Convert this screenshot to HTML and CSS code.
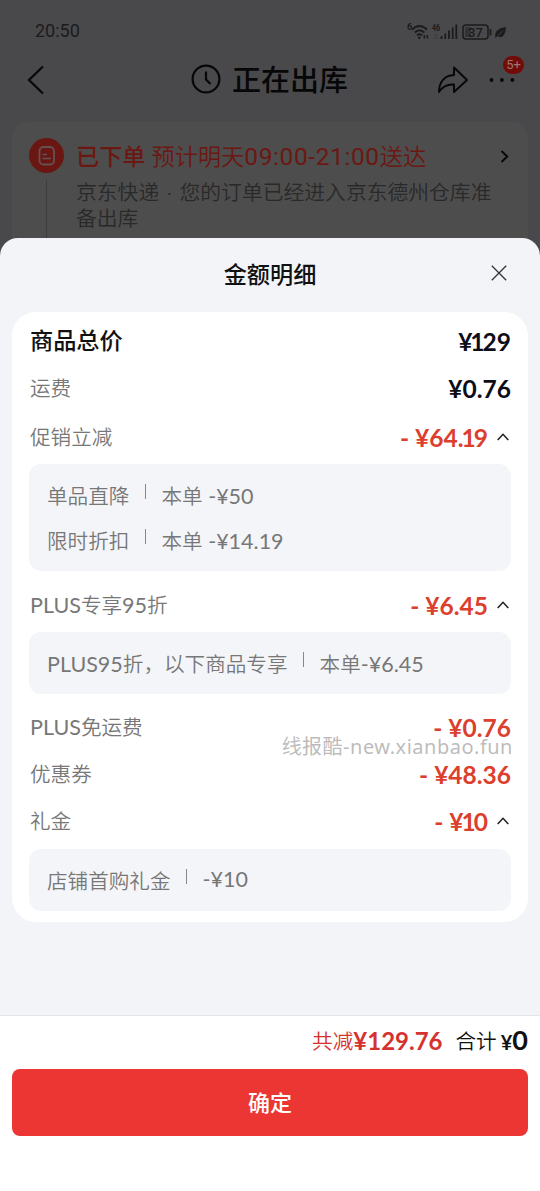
FILE: index.html
```html
<!DOCTYPE html>
<html lang="zh-CN">
<head>
<meta charset="utf-8">
<title>金额明细</title>
<link rel="stylesheet" href="styles.css">
</head>
<body>
<div class="page">
  <header class="status">
    <span class="time">20:50</span>
    <svg class="status-icons" width="102" height="20" viewBox="0 0 102 20" fill="none" stroke="#1b1b1c">
      <text x="0" y="8" class="tiny">6</text>
      <path d="M5 7.5Q12.500 0.500 20 7.500M7.800 10.500Q12.500 6.300 17.200 10.500M10 13.300Q12.500 11.300 15 13.300" stroke-width="1.800"/>
      <circle cx="12.300" cy="15.700" r="1.300" fill="#1b1b1c" stroke="none"/>
      <path d="M17.300 13v3.500M20.300 13v3.500" stroke-width="1.500"/>
      <text x="25" y="9" class="tiny" textLength="8" lengthAdjust="spacingAndGlyphs">46</text>
      <path d="M34.500 14v3M38.300 11.500v5.500M42 8.500v8.500M45.700 5.500v11.500M49.300 2.500v14.500" stroke-width="1.800"/>
      <path d="M27 13h4M27 16h4" stroke="#3a3a3c"/>
      <rect x="56" y="3" width="25" height="14" rx="3" stroke-width="1.500"/>
      <path d="M58 5h6v10h-6z" fill="#333335" stroke="none"/>
      <text x="61" y="14.500" class="battery">37</text>
      <path d="M83.500 7v6.500" stroke-width="1.800"/>
      <path d="M88.500 16.500C87 8.500 92 6 99 5C98.500 13 95.500 16.500 90.500 14.500Z" fill="#1b1b1c" stroke="none"/>
      <path d="M88.500 16.500L96 8.500" stroke="#49494b" stroke-width=".8"/>
    </svg>
  </header>
  <nav class="nav">
    <svg class="back" width="18" height="30" viewBox="0 0 18 30" fill="none" stroke="#070708" stroke-width="2.200"><path d="M16 1.500L2 15L16 28.500"/></svg>
    <div class="nav-title">
      <svg width="30" height="30" viewBox="0 0 30 30" fill="none" stroke="#070708" stroke-width="2.200"><circle cx="15" cy="14" r="13.400"/><path d="M15 6.500v8l4.500 4.500"/></svg>
      <span>正在出库</span>
    </div>
    <div class="nav-actions">
      <svg width="32" height="28" viewBox="0 0 32 28" fill="none" stroke="#070708" stroke-width="1.900" stroke-linejoin="round"><path d="M17 1.500L30 14L17 26V18.500C10 18 5.500 20.500 2 26C2 16.500 7 9.500 17 9Z"/></svg>
      <div class="more">
        <svg width="26" height="6" viewBox="0 0 26 6" fill="#070708"><circle cx="2.500" cy="3" r="1.900"/><circle cx="12.900" cy="3" r="1.900"/><circle cx="23.400" cy="3" r="1.900"/></svg>
        <span class="badge">5+</span>
      </div>
    </div>
  </nav>
  <section class="order">
    <div class="rail">
      <svg width="35" height="35" viewBox="0 0 35 35" fill="none"><circle cx="17.500" cy="17.500" r="17.500" fill="#6a1714"/><rect x="10.500" y="9" width="14.500" height="17.500" rx="4" stroke="#65514f" stroke-width="1.800"/><path d="M13.500 16.500h4.500M13.500 20.500h8.500" stroke="#65514f" stroke-width="1.700"/></svg>
      <i class="rail-line"></i>
    </div>
    <div class="order-main">
      <div class="order-head">
        <span class="placed">已下单</span>
        <span class="eta">预计明天<span class="eta-time">09:00-21:00</span>送达</span>
        <svg class="go" width="9" height="13" viewBox="0 0 9 13" fill="none" stroke="#070708" stroke-width="1.900"><path d="M1.500 1L7.200 6.500L1.500 12"/></svg>
      </div>
      <p class="order-text">京东快递 · 您的订单已经进入京东德州仓库准备出库</p>
    </div>
  </section>

  <main class="sheet">
    <div class="sheet-head">
      <h1>金额明细</h1>
      <svg class="close" width="16" height="16" viewBox="0 0 16 16" stroke="#333" stroke-width="1.300"><path d="M.8.8L15.200 15.200M15.200.8L.8 15.200"/></svg>
    </div>
    <div class="card">
      <div class="row total"><span>商品总价</span><b class="amount"><span>¥<span class="one">1</span>29</span></b></div>
      <div class="row freight"><span>运费</span><b class="amount">¥0.76</b></div>
      <div class="row promo"><span>促销立减</span><b class="amount off"><i>-</i><span>¥64.<span class="one">1</span>9</span></b><svg class="fold" width="12" height="8" viewBox="0 0 12 8"><path d="M.7 7L6 1.300L11.300 7"/></svg></div>
      <div class="box">
        <div class="item"><span>单品直降</span><i class="bar"></i><span>本单 <span class="num">-¥50</span></span></div>
        <div class="item"><span>限时折扣</span><i class="bar"></i><span>本单 <span class="num">-¥14.19</span></span></div>
      </div>
      <div class="row plus"><span><span class="num">PLUS</span>专享<span class="num">95</span>折</span><b class="amount off"><i>-</i>¥6.45</b><svg class="fold" width="12" height="8" viewBox="0 0 12 8"><path d="M.7 7L6 1.300L11.300 7"/></svg></div>
      <div class="box">
        <div class="item"><span><span class="num">PLUS95</span>折，以下商品专享</span><i class="bar"></i><span>本单<span class="num">-¥6.45</span></span></div>
      </div>
      <div class="row ship"><span><span class="num">PLUS</span>免运费</span><b class="amount off"><i>-</i>¥0.76</b></div>
      <div class="row coupon"><span>优惠券</span><b class="amount off"><i>-</i>¥48.36</b></div>
      <div class="row gift"><span>礼金</span><b class="amount off"><i>-</i><span>¥<span class="one">1</span>0</span></b><svg class="fold" width="12" height="8" viewBox="0 0 12 8"><path d="M.7 7L6 1.300L11.300 7"/></svg></div>
      <div class="box">
        <div class="item"><span>店铺首购礼金</span><i class="bar"></i><span class="num lifted">-¥10</span></div>
      </div>
      <span class="watermark">线报酷-new.xianbao.fun</span>
    </div>
    <footer class="footer">
      <div class="summary">
        <span class="saved">共减<b>¥129.76</b></span>
        <span class="pay">合计<b><small>¥</small>0</b></span>
      </div>
      <button class="confirm">确定</button>
    </footer>
  </main>
</div>
</body>
</html>
```
FILE: styles.css
```css
* { box-sizing: border-box; }
body {
  margin: 0;
  background: #49494b;
  font-family: Lato, "Noto Sans CJK SC", sans-serif;
  font-size: 20.6px;
  font-weight: 350;
}
i { font-style: normal; }
svg { display: block; flex: none; overflow: visible; }
.page { height: 1191px; display: flex; flex-direction: column; overflow: hidden; }

.status { height: 56px; padding: 8px 31px 0 35px; display: flex; align-items: center; justify-content: space-between; }
.time { font: 400 18px/20px Roboto, sans-serif; color: #1b1b1c; padding-bottom: 2px; }
.tiny { font: 700 9px Roboto, sans-serif; fill: #1b1b1c; stroke: none; }
.battery { font: 500 13px Roboto, sans-serif; fill: #1b1b1c; stroke: none; }

.nav { height: 48px; padding: 0 25px 0 27px; display: flex; align-items: center; justify-content: space-between; color: #070708; }
.nav-title { display: flex; align-items: center; gap: 11px; padding-left: 57px; font-size: 29px; font-weight: 500; line-height: 48px; }
.nav-actions { display: flex; align-items: center; gap: 20px; }
.more { position: relative; }
.badge {
  position: absolute; right: -9px; top: -21px; width: 21px; height: 18px; border-radius: 9px;
  background: #730b09; color: #9a7775; font: 400 13px/17px Roboto, sans-serif; text-align: center;
}

.order { height: 136px; flex: none; margin: 18px 12px 0; padding: 16px 0 0 17px; border-radius: 16px; background: #4d4d4d; display: flex; gap: 12px; }
.rail { display: flex; flex-direction: column; align-items: center; gap: 7px; }
.rail-line { width: 1px; flex: 1; background: #3d3d3d; }
.order-main { flex: 1; }
.order-head { height: 36px; display: flex; align-items: center; color: #6c1812; font-size: 23.2px; line-height: 36px; }
.placed { font-weight: 500; margin-right: 6px; }
.eta { font-size: 23.2px; white-space: nowrap; }
.eta-time { font-family: Roboto, sans-serif; font-weight: 400; font-size: 24.5px; letter-spacing: .6px; }
.go { margin-left: auto; margin-right: 19px; }
.order-text { margin: 5px 28px 0 0; color: #292929; font-size: 20.8px; line-height: 26px; word-spacing: 2px; }

.sheet { position: relative; margin-top: -20px; flex: 1; border-radius: 18px 18px 0 0; background: #f3f4f8; display: flex; flex-direction: column; }
.sheet-head { height: 74px; padding-bottom: 2px; display: flex; align-items: center; justify-content: center; }
.sheet-head h1 { margin: 0; font-size: 23.2px; font-weight: 500; line-height: 34px; color: #111; }
.close { position: absolute; right: 33px; top: 27px; }

.card { position: relative; height: 610px; margin: 0 12px; padding: 6px 17px 11px; border-radius: 24px; background: #fff; }
.row { display: flex; align-items: center; justify-content: flex-end; color: #777; line-height: 30px; height: 46px; padding-left: 1px; }
.row > span { margin-right: auto; }
.total > span { font-size: 23.2px; font-weight: 500; color: #111; padding-bottom: 2px; }
.freight, .coupon { height: 48px; }
.promo { height: 52px; padding-bottom: 2px; }
.plus { height: 61px; padding-top: 7px; }
.ship { height: 56px; padding-top: 10px; }
.gift { height: 51px; padding-bottom: 5px; }
.amount { display: flex; gap: 6px; padding-top: 1px; color: #0d0d18; font-size: 24.5px; font-weight: 700; }
.one { margin: 0 -2px; }
.off { color: #dc402d; }
.fold { margin: 0 2px 0 9px; fill: none; stroke: #222; stroke-width: 1.600; }

.box { padding: 8.5px 18px; border-radius: 12px; background: #f4f5f9; color: #777; }
.item { height: 45px; padding-top: 1px; display: flex; align-items: center; line-height: 30px; }
.bar { width: 1px; height: 15px; margin: 0 15.5px; background: #888; transform: translateY(-4px); }
.num { font-size: 21.5px; font-weight: 400; }
.lifted { transform: translateY(-2px); }
.watermark { position: absolute; right: 15px; top: 420px; color: rgba(120, 120, 120, .5); font: 400 20px/30px "Noto Sans", "Noto Sans CJK SC", sans-serif; letter-spacing: .5px; white-space: nowrap; }

.footer { margin-top: auto; height: 176px; padding: 0 12px; border-top: 1px solid #e4e5e9; background: #fff; }
.summary { height: 53px; padding-bottom: 4px; display: flex; align-items: center; justify-content: flex-end; gap: 13px; line-height: 34px; }
.saved, .pay { display: flex; align-items: center; }
.saved { color: #d5322f; }
.saved b { font-size: 24px; font-weight: 700; }
.pay { color: #111; }
.pay b { display: flex; align-items: baseline; font-size: 27px; font-weight: 700; margin-left: 4px; }
.pay small { font-size: 20px; }
.confirm { display: block; width: 100%; height: 67px; padding: 0 0 3px; border: 0; border-radius: 8px; background: #eb3634; color: #fff; font: 500 22px "Noto Sans CJK SC", sans-serif; }
```
